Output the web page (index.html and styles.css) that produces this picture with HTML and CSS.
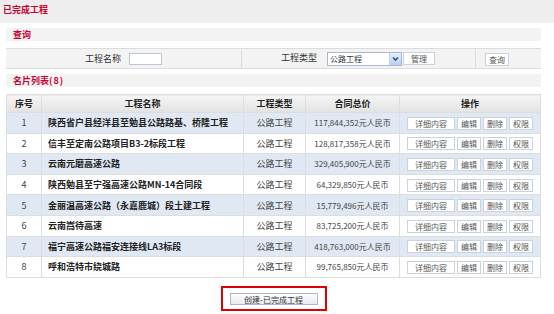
FILE: index.html
```html
<!DOCTYPE html>
<html lang="zh-CN">
  <head>
    <meta charset="UTF-8" />
    <title>已完成工程</title>
    <link rel="stylesheet" href="styles.css">
  </head>
  <body>
    <div class="page-title">已完成工程</div>
    <div class="main">
      <div class="bar">查询</div>
      <table class="query">
        <tr>
          <td class="q-name">工程名称 <input type="text" class="txt"></td>
          <td class="q-type">工程类型
            <span class="sel"><span class="sel-text">公路工程</span><span class="sel-arrow"><svg width="9" height="9" viewBox="0 0 9 9"><path d="M2 3.5 L4.5 6 L7 3.5" fill="none" stroke="#2b4f9e" stroke-width="1.6"/></svg></span></span><button class="btn btn-manage">管理</button>
          </td>
          <td class="q-go"><button class="btn">查询</button></td>
        </tr>
      </table>
      <div class="bar">名片列表<span class="count">(8)</span></div>
      <table class="list">
        <thead>
          <tr>
            <th class="c-no">序号</th>
            <th class="c-name">工程名称</th>
            <th class="c-type">工程类型</th>
            <th class="c-price">合同总价</th>
            <th class="c-ops">操作</th>
          </tr>
        </thead>
        <tbody id="rows"></tbody>
      </table>
      <div class="footer">
        <div class="create-box"><button class="btn btn-create">创建-已完成工程</button></div>
      </div>
    </div>

    <script>
      const projects = [
        ["陕西省户县经洋县至勉县公路路基、桥隆工程", "117,844,352"],
        ["信丰至定南公路项目B3-2标段工程", "128,817,358"],
        ["云南元磨高速公路", "329,405,900"],
        ["陕西勉县至宁强高速公路MN-14合同段", "64,329,850"],
        ["金丽温高速公路（永嘉鹿城）段土建工程", "15,779,496"],
        ["云南嵩待高速", "83,725,200"],
        ["福宁高速公路福安连接线LA3标段", "418,763,000"],
        ["呼和浩特市绕城路", "99,765,850"],
      ];
      const tbody = document.getElementById("rows");

      projects.forEach((p, i) => {
        const tr = document.createElement("tr");
        tr.innerHTML =
          `<td class="c-no">${i + 1}</td>` +
          `<td class="c-name">${p[0]}</td>` +
          `<td class="c-type">公路工程</td>` +
          `<td class="c-price">${p[1]}元人民币</td>` +
          `<td class="c-ops"><button class="btn op-wide">详细内容</button><button class="btn">编辑</button><button class="btn">删除</button><button class="btn">权限</button></td>`;
        tbody.appendChild(tr);
      });
    </script>
  </body>
</html>
```

FILE: styles.css
```css
body {
  margin: 0;
  background-color: #fff;
  font-family: "Noto Sans CJK SC", sans-serif;
  font-size: 9px;
  color: #333;
}
.page-title {
  height: 23px;
  line-height: 19px;
  padding-left: 3px;
  background-color: #eeeeee;
  color: #cc0033;
  font-weight: bold;
}
.main {
  width: 535px;
  margin-left: 6px;
}
.bar {
  height: 13px;
  line-height: 13px;
  margin-top: 5px;
  padding-left: 7px;
  background-color: #f3f3f3;
  color: #cc0033;
  font-weight: bold;
}
.count {
  letter-spacing: 1px;
}
.query {
  width: 100%;
  height: 21px;
  margin: 7px 0 3px;
  table-layout: fixed;
  border-collapse: collapse;
  background-color: #f3f3f3;
  border-top: 1px solid #dcdcdc;
  border-bottom: 1px solid #dcdcdc;
  white-space: nowrap;
}
.query td {
  padding: 0;
  text-align: center;
  border-right: 1px solid #dcdcdc;
}
.query td:last-child {
  border-right: none;
}
.q-name {
  width: 235px;
}
.q-type {
  width: 233px;
}
.query .q-go {
  text-align: left;
  padding-left: 8px;
}
.txt {
  width: 31px;
  height: 10px;
  margin: 0 0 0 6px;
  padding: 0;
  border: 1px solid #b9c7d9;
  vertical-align: middle;
}
.sel {
  display: inline-flex;
  align-items: center;
  width: 73px;
  height: 12px;
  margin-left: 8px;
  border: 1px solid #a9b8cc;
  background-color: #fff;
  font-size: 8px;
  text-align: left;
  vertical-align: middle;
}
.sel-text {
  flex: 1;
  padding-left: 2px;
  line-height: 12px;
}
.sel-arrow {
  display: flex;
  align-items: center;
  justify-content: center;
  width: 11px;
  height: 12px;
  background: linear-gradient(#e6eefc, #bccdf0);
  border-left: 1px solid #c3d0ea;
}
.btn {
  height: 13px;
  padding: 0 3px;
  margin: 0 1px;
  font: inherit;
  font-size: 8px;
  line-height: 11px;
  color: #555;
  background-color: #fff;
  border: 1px solid #c8d3e0;
  vertical-align: middle;
}
.btn-manage {
  width: 32px;
  margin-left: 1px;
}
.list {
  width: 100%;
  margin-top: 7px;
  table-layout: fixed;
  border-collapse: collapse;
}
.list th,
.list td {
  border: 1px solid #dddddd;
  text-align: center;
  padding: 0;
  white-space: nowrap;
}
.list th {
  height: 17px;
  background: linear-gradient(#f5f5f5, #e2e2e2);
  font-weight: bold;
  color: #222;
}
.list td {
  height: 19.6px;
  color: #444;
}
.list tbody tr:nth-child(odd) td {
  background-color: #dfe8f3;
}
.list .c-no {
  width: 34px;
}
.list .c-name {
  width: 201px;
}
.list td.c-name {
  text-align: left;
  padding-left: 6px;
  font-weight: bold;
  color: #222;
}
.list .c-type {
  width: 61px;
}
.list .c-price {
  width: 93px;
  font-size: 8px;
}
.list th.c-price {
  font-size: 9px;
}
.op-wide {
  width: 48px;
}
.footer {
  margin-top: 8px;
  text-align: center;
}
.create-box {
  display: inline-block;
  padding: 4px 6px;
  border: 2px solid #e00000;
}
.btn-create {
  width: 88px;
  height: 12px;
  background: linear-gradient(#fdfdfd, #e6ebf1);
  border-color: #b0b8c4;
  color: #333;
}
```
